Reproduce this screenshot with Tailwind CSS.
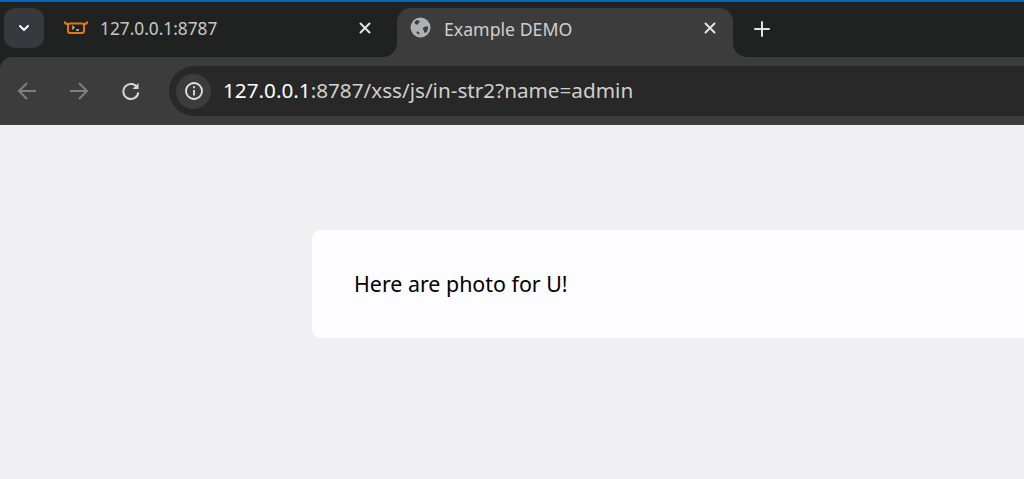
<!DOCTYPE html>
<html lang="en">
<head>
  <meta charset="UTF-8">
  <title>Example DEMO</title>
  <script src="https://cdn.jsdelivr.net/npm/@tailwindcss/browser@4"></script>
</head>
<body class="bg-[#f0f0f2] h-[479px] overflow-hidden font-['Noto_Sans',sans-serif]">
  <!-- browser chrome -->
  <div class="bg-[#202222] border-t-[2px] border-[#0067c0]">
    <div class="flex h-[55px] bg-[#3c3c3c]">
      <div class="w-[397px] h-full flex bg-[#202222] rounded-br-[14px] pt-[6px]">
        <div class="ml-[4px] w-[40px] h-[40px] rounded-[12px] bg-[#363a3e] flex items-center justify-center">
          <svg width="14" height="14" viewBox="0 0 14 14" fill="none" stroke="#fff" stroke-width="2" stroke-linecap="round" stroke-linejoin="round"><path d="M3 5l4 4 4-4"/></svg>
        </div>
        <div class="flex items-center h-[40px] ml-[20px] w-[333px]">
          <svg class="shrink-0 mt-[-2px]" width="24" height="13" viewBox="0 0 24 13" fill="none" stroke="#e07a10" stroke-width="2"><path d="M.500 .500c.3 2 1.500 2.500 3.500 2.500M23.500 .500c-.3 2-1.500 2.500-3.500 2.500"/><rect x="4" y="2.500" width="16" height="9.500" rx="2"/><path d="M8 5l2 1.700-2 1.700" stroke-width="1.200" stroke="#e8c9a0"/><path d="M12 9h3" stroke-width="1.400" stroke="#e8c9a0"/></svg>
          <span class="ml-[12px] mt-[2px] text-[17.300px] text-[#c7c7c7]">127.0.0.1:8787</span>
          <svg class="ml-auto mr-[25px]" width="14" height="14" viewBox="0 0 14 14" stroke="#e3e3e3" stroke-width="2" stroke-linecap="round"><path d="M2.500 2.500l9 9M11.500 2.500l-9 9"/></svg>
        </div>
      </div>
      <div class="w-[336px] h-full bg-[#202222] pt-[6px]">
        <div class="h-full bg-[#3c3c3c] rounded-t-[14px] flex items-start pt-[9px]">
          <svg class="ml-[13px] shrink-0" width="21" height="21" viewBox="0 0 21 21"><circle cx="10.500" cy="10.500" r="10" fill="#adb0b4"/><path d="M6 3.500c1.500-.5 3-.2 3.500 .8 .3 1-1 1.500-1.200 2.500s-1.500 1-2.200.5S4.500 6.300 4.500 5.500zM18 9.500c-2-.4-4.500.2-5 1.700-.4 1.300 1 1.800 1 3s1 2 2 1.500c1.200-1.300 2-3.500 2-5zM7.500 14.500c1.300 0 2.200 1.200 1.800 2.800-1.300 0-2.300-.8-2.800-1.600 0-.7.300-1.200 1-1.200z" fill="#3c3c3c"/></svg>
          <span class="ml-[13px] text-[17.700px] leading-[24px] text-[#cfcfcf]">Example DEMO</span>
          <svg class="ml-auto mr-[16px] mt-[4px]" width="14" height="14" viewBox="0 0 14 14" stroke="#e3e3e3" stroke-width="2" stroke-linecap="round"><path d="M2.500 2.500l9 9M11.500 2.500l-9 9"/></svg>
        </div>
      </div>
      <div class="flex-1 h-full bg-[#202222] rounded-bl-[14px] pt-[19px] pl-[21px]">
        <svg width="16" height="16" viewBox="0 0 16 16" stroke="#e3e3e3" stroke-width="2" stroke-linecap="round"><path d="M8 1v14M1 8h14"/></svg>
      </div>
    </div>
    <!-- toolbar -->
    <div class="h-[68px] bg-[#3c3c3c] rounded-tl-[12px] flex items-center pl-[17px]">
      <svg width="20" height="20" viewBox="0 0 20 20" fill="none" stroke="#7f7f7f" stroke-width="2"><path d="M19 10H2.500M10 2l-8 8 8 8"/></svg>
      <svg class="ml-[32px]" width="20" height="20" viewBox="0 0 20 20" fill="none" stroke="#7f7f7f" stroke-width="2"><path d="M1 10h16.500M10 2l8 8-8 8"/></svg>
      <svg class="ml-[32px]" width="20" height="20" viewBox="0 0 20 20" fill="none" stroke="#d6d6d6" stroke-width="2"><path d="M16.500 7a7.500 7.500 0 1 0 .8 4.500"/><path d="M17.500 2v6h-6" fill="#d6d6d6" stroke="none"/></svg>
      <div class="ml-[28px] flex-1 h-[50px] bg-[#282828] rounded-l-[25px] flex items-center pl-[7px]">
        <div class="w-[35px] h-[35px] rounded-full bg-[#3c3c3c] flex items-center justify-center">
          <svg width="20" height="20" viewBox="0 0 20 20" fill="none" stroke="#e3e3e3" stroke-width="1.800"><circle cx="10" cy="10" r="8"/><path d="M10 9v5.500M10 5.200v2"/></svg>
        </div>
        <p class="ml-[12px] text-[20.700px] text-[#d0d0d0]"><span class="text-white">127.0.0.1</span>:8787/xss/js/in-str2?name=admin</p>
      </div>
    </div>
  </div>
  <!-- page content -->
  <div class="mt-[105px] ml-[312px] h-[108px] bg-[#fdfcff] rounded-l-[9px] flex items-center pl-[42px]">
    <p class="text-[21.400px] text-black">Here are photo for U!</p>
  </div>
</body>
</html>
